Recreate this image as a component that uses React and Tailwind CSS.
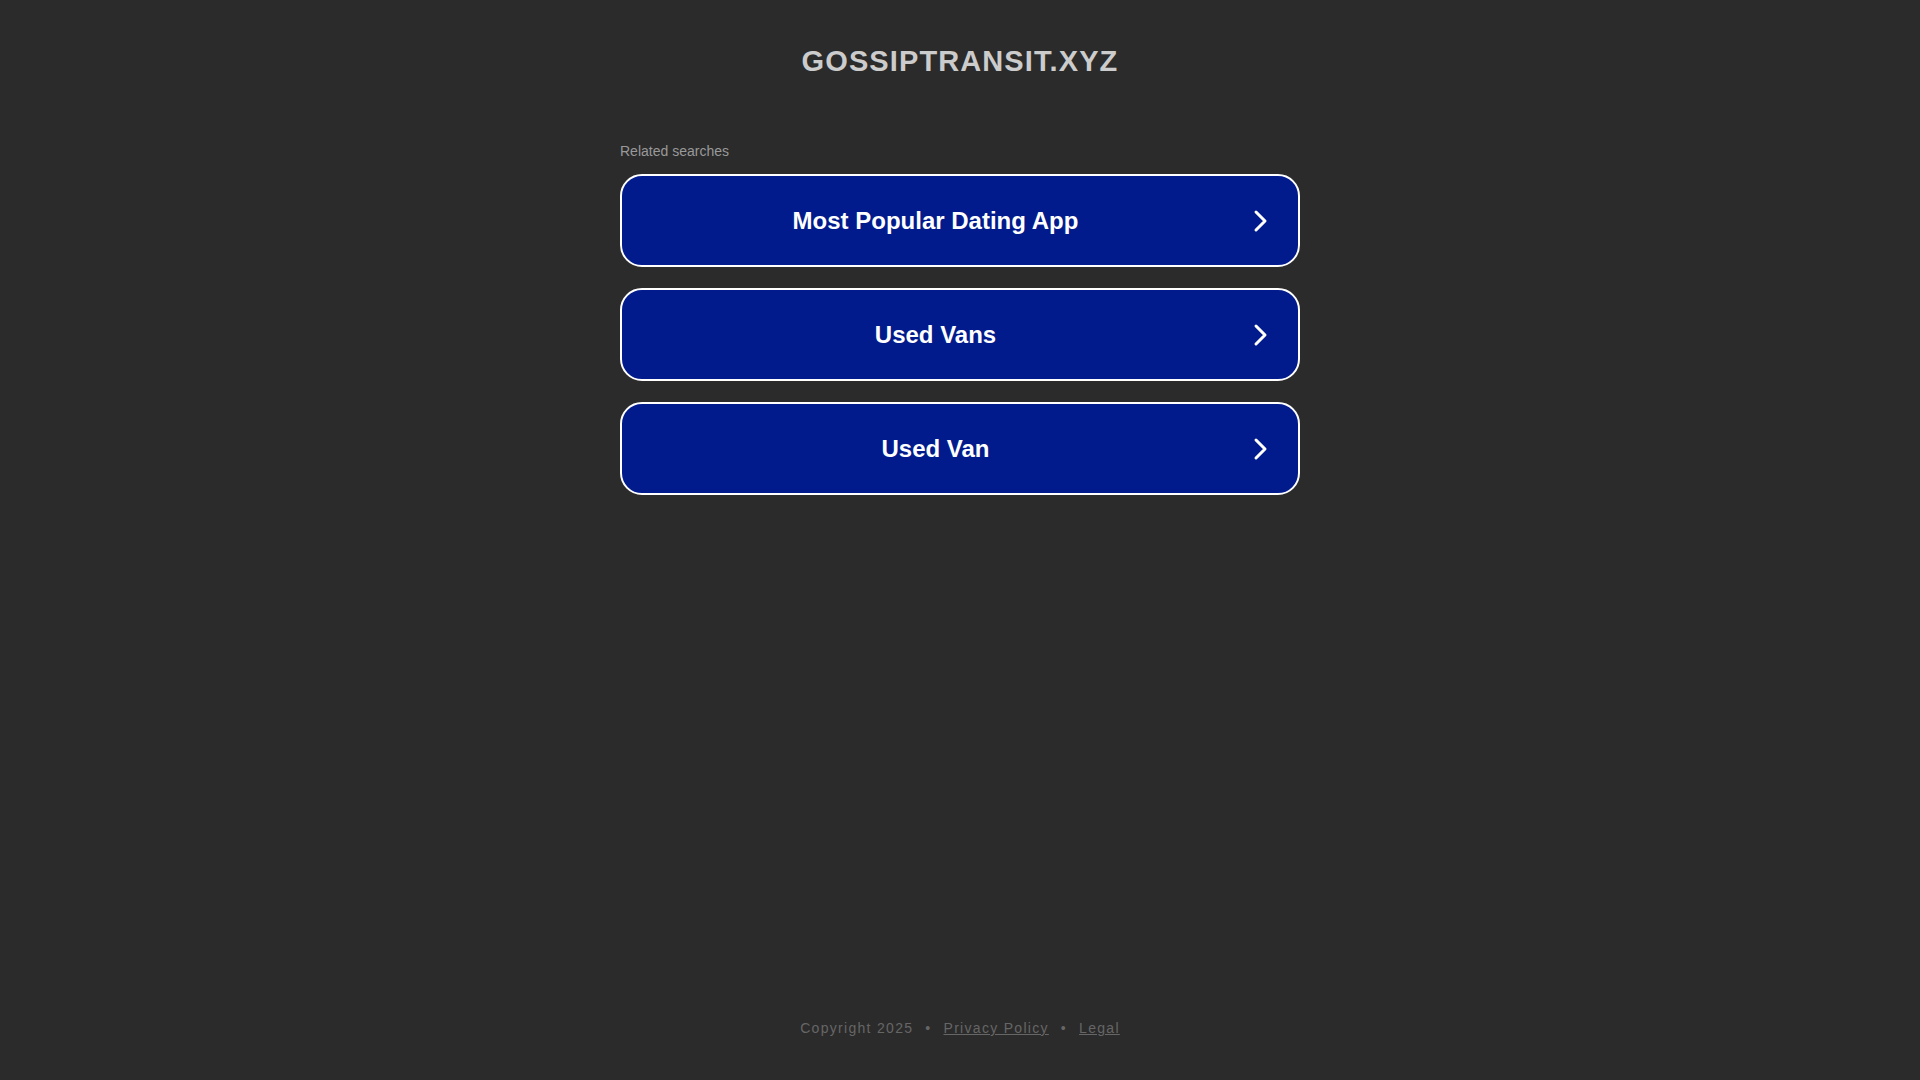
export default function App() {
  const items = ["Most Popular Dating App", "Used Vans", "Used Van"];

  return (
    <div className="min-h-screen bg-[#2b2b2b] flex flex-col" style={{ fontFamily: '"Liberation Sans", Arial, sans-serif' }}>
      <header className="pt-[42px] text-center">
        <h1 className="text-[29px] leading-[38px] font-bold tracking-[1.1px] text-[#cccccc]">GOSSIPTRANSIT.XYZ</h1>
      </header>

      <main className="w-[680px] mx-auto mt-[62px]">
        <p className="text-[14px] leading-[18px] text-[#999999]">Related searches</p>
        <div className="mt-[14px] flex flex-col gap-[21px]">
          {items.map((item) => (
            <a
              key={item}
              href="#"
              className="relative flex items-center h-[93px] rounded-[22px] border-2 border-white bg-[#011b8c] pr-[49px]"
            >
              <span className="flex-1 text-center text-[24px] font-bold text-white">{item}</span>
              <svg className="absolute right-[27px] top-1/2 -translate-y-1/2" width="20" height="24" viewBox="0 0 20 24" fill="none">
                <path d="M5 3l9 9-9 9" stroke="white" strokeWidth="3" strokeLinecap="round" strokeLinejoin="round" />
              </svg>
            </a>
          ))}
        </div>
      </main>

      <footer className="mt-auto pb-[41px] text-center text-[14px] tracking-[1.3px] text-[#666666]">
        <span>Copyright 2025</span>
        <span className="mx-[12px]">•</span>
        <a href="#" className="underline">Privacy Policy</a>
        <span className="mx-[12px]">•</span>
        <a href="#" className="underline">Legal</a>
      </footer>
    </div>
  );
}
